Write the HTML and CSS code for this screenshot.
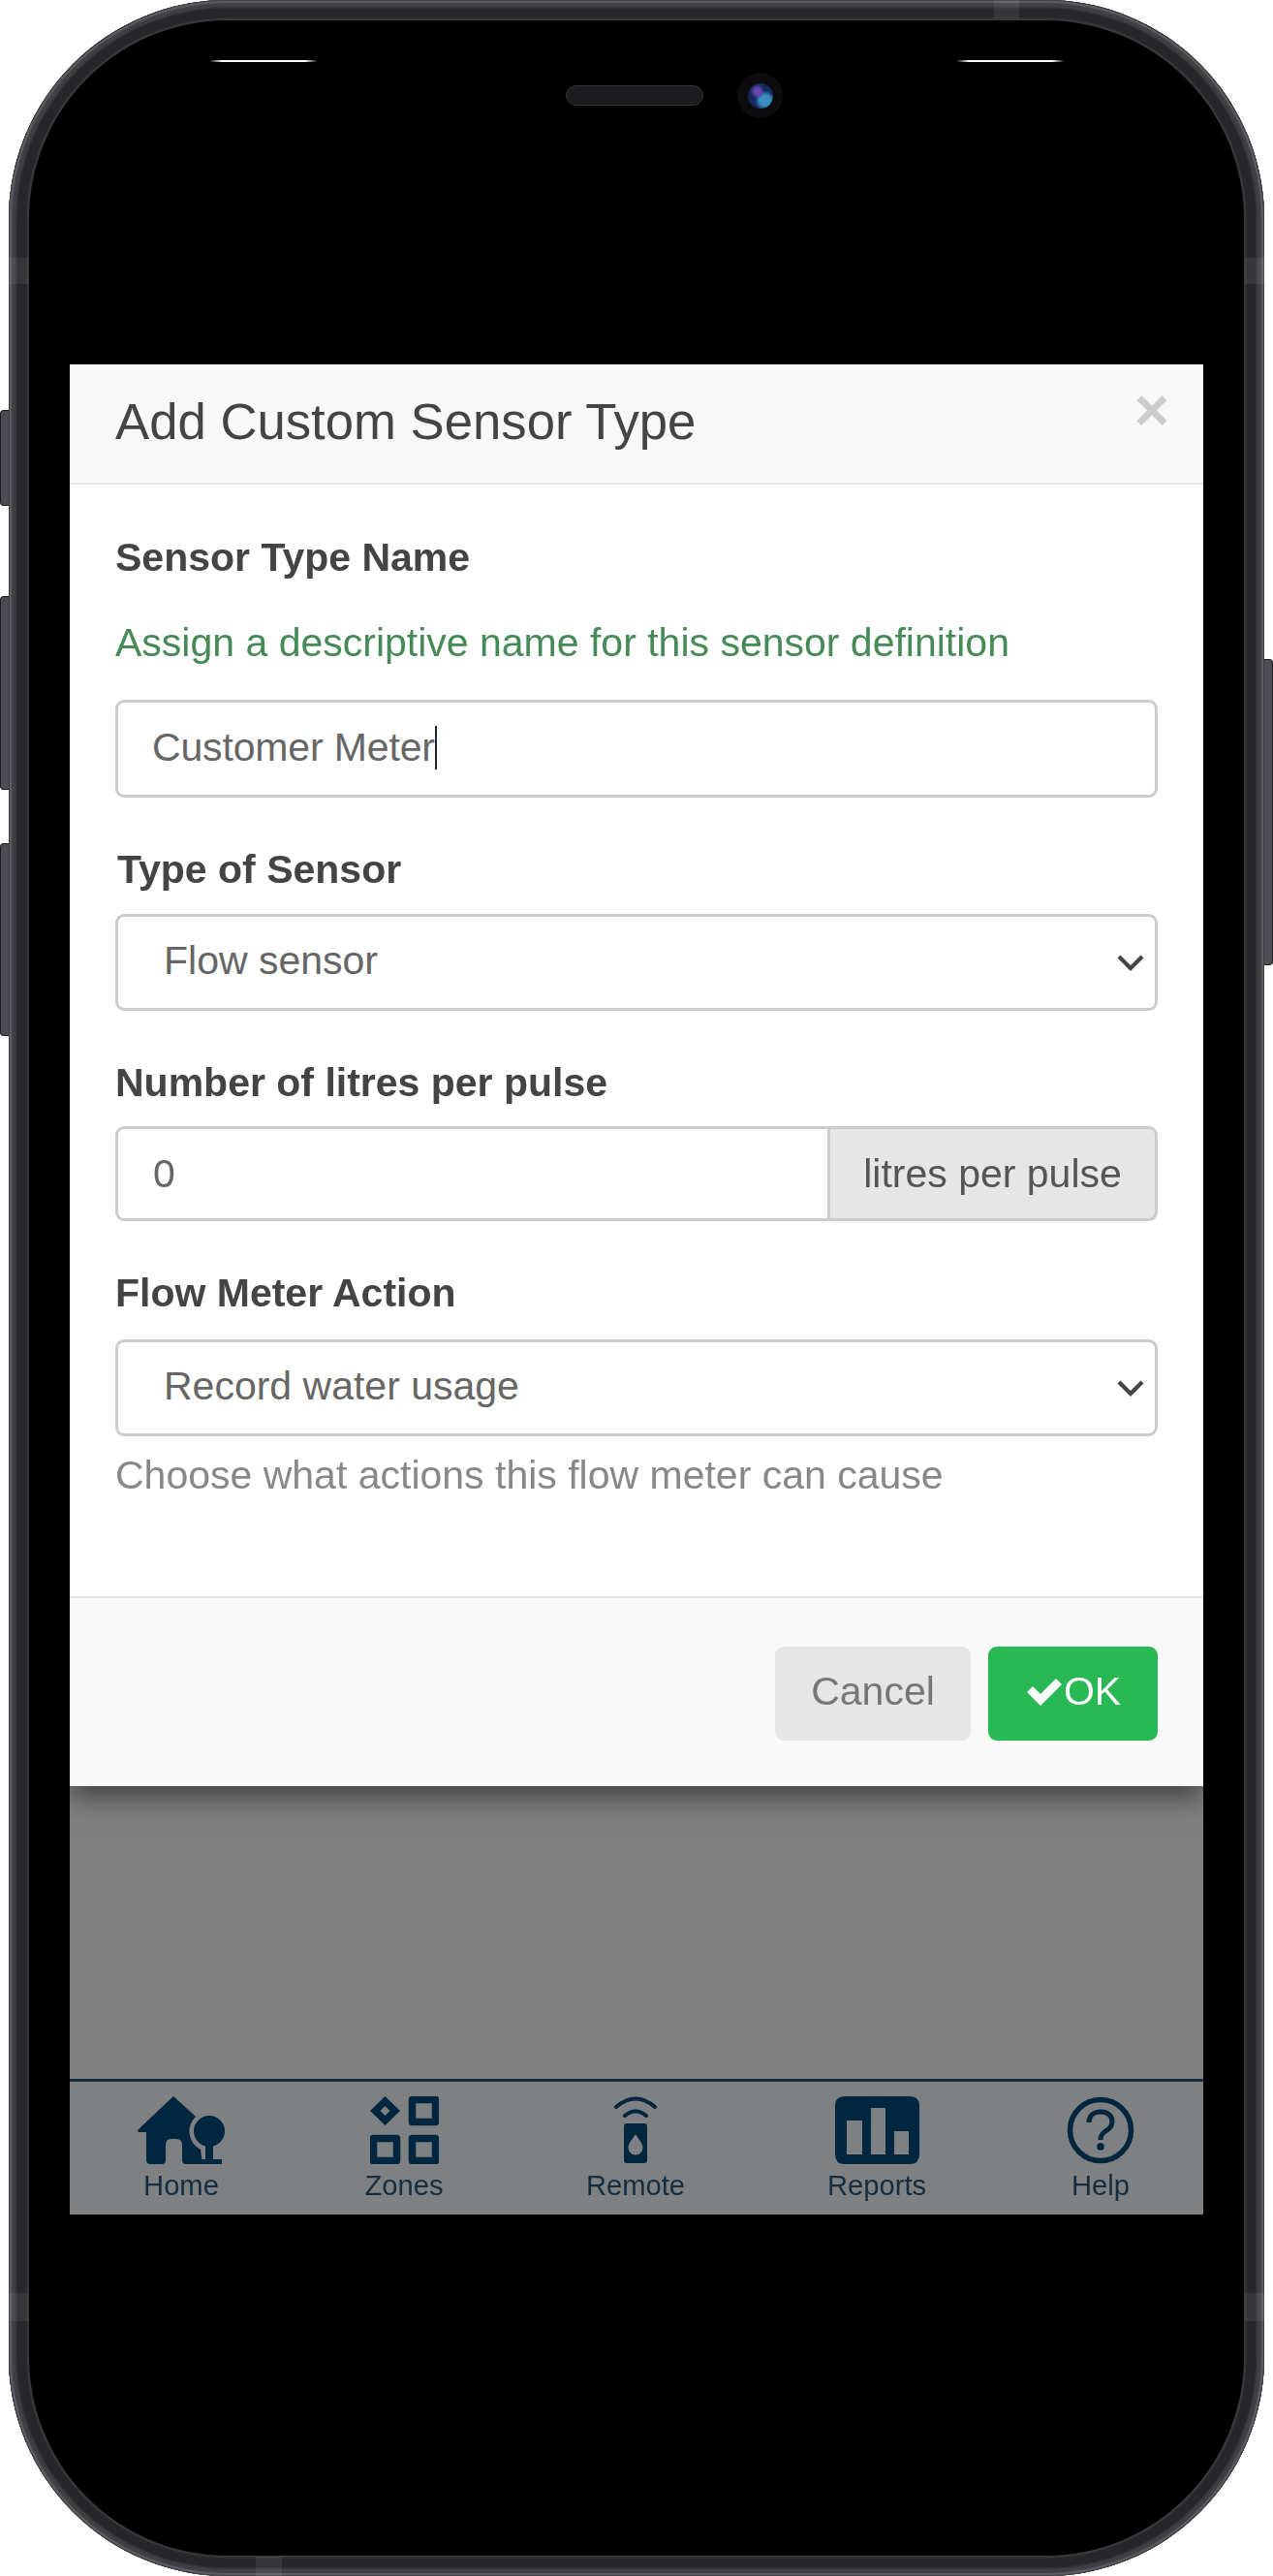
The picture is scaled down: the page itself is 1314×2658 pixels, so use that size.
FILE: index.html
```html
<!DOCTYPE html>
<html lang="en">
<head>
<meta charset="utf-8">
<title>Add Custom Sensor Type</title>
<link rel="stylesheet" href="styles.css">
</head>
<body>
<div class="device">
  <span class="side-btn l1"></span><span class="side-btn l2"></span><span class="side-btn l3"></span><span class="side-btn r1"></span>
  <span class="band b-top"></span><span class="band b-bottom"></span><span class="band b-left1"></span><span class="band b-right1"></span><span class="band b-left2"></span><span class="band b-right2"></span>
  <span class="hair h1"></span><span class="hair h2"></span>
  <span class="speaker"></span>
  <span class="camera"><span class="lens"></span></span>
  <div class="phone">
    <div class="screen">
      <section class="modal">
        <header class="modal-header">
          <h4 class="modal-title">Add Custom Sensor Type</h4>
          <span class="close">×</span>
        </header>
        <div class="modal-body">
          <label class="label label-first">Sensor Type Name</label>
          <p class="hint-green">Assign a descriptive name for this sensor definition</p>
          <div class="control control-name">Customer Meter<span class="caret"></span></div>
          <label class="label label-type">Type of Sensor</label>
          <div class="control control-select">Flow sensor<svg class="chev" viewBox="0 0 28 20"><path d="M2 3l12 12 12-12" fill="none" stroke="#444" stroke-width="4.2"/></svg></div>
          <label class="label label-litres">Number of litres per pulse</label>
          <div class="group">
            <div class="group-input">0</div>
            <div class="group-addon">litres per pulse</div>
          </div>
          <label class="label label-flow">Flow Meter Action</label>
          <div class="control control-select select-flow">Record water usage<svg class="chev" viewBox="0 0 28 20"><path d="M2 3l12 12 12-12" fill="none" stroke="#444" stroke-width="4.2"/></svg></div>
          <p class="help">Choose what actions this flow meter can cause</p>
        </div>
        <footer class="modal-footer">
          <span class="btn btn-cancel">Cancel</span>
          <span class="btn btn-ok"><svg class="check" viewBox="0 0 40 30"><path d="M2 16l6-6 8 8L32 2l6 6-22 22z" fill="#fff"/></svg>OK</span>
        </footer>
      </section>
      <div class="spacer"></div>
      <nav class="tabs">
        <div class="tab">
          <svg class="ico" width="92" height="70" viewBox="0 0 92 70"><path fill="#01263f" d="M38 0L61 21A21 21 0 0 0 66 55L68 70H51q-4 0-4-4V50q0-6-6-6H36q-6 0-6 6V66q0 4-4 4H14q-4 0-4-4V37H3q-3 0-1-3z"/><circle cx="75" cy="36" r="16" fill="#01263f"/><path fill="#01263f" d="M71 50h8v15h9v5H65v-5h6z"/></svg>
          <span>Home</span>
        </div>
        <div class="tab">
          <svg class="ico" width="71" height="70" viewBox="0 0 71 70"><path fill="#01263f" fill-rule="evenodd" d="M15.5 0l15.500 15-15.500 15L0 15zM15.500 10l-5 5 5 5 5-5z"/><path fill="none" stroke="#01263f" stroke-width="7.500" stroke-linejoin="round" d="M43.500 3.500h24v23h-24zM3.500 43.500h24v23h-24zM43.500 43.500h24v23h-24z"/></svg>
          <span>Zones</span>
        </div>
        <div class="tab">
          <svg class="ico" width="44" height="70" viewBox="0 0 44 70"><path fill="none" stroke="#01263f" stroke-width="4" stroke-linecap="round" d="M2 11Q22-6 42 11M11 20Q22 11 33 20"/><path fill="#01263f" fill-rule="evenodd" d="M13 28h18q3 0 3 3v35q0 3-3 3H13q-3 0-3-3V31q0-3 3-3zM22 39c-4 6-7.500 10-7.500 14a7.500 7.500 0 0 0 15 0c0-4-3.500-8-7.500-14z"/></svg>
          <span>Remote</span>
        </div>
        <div class="tab">
          <svg class="ico" width="87" height="70" viewBox="0 0 87 70"><path fill="#01263f" fill-rule="evenodd" d="M10 0h67q10 0 10 10v50q0 10-10 10H10Q0 70 0 60V10Q0 0 10 0zM12 25v35h16V25zM37 12v48h15V12zM61 36v24h15V36z"/></svg>
          <span>Reports</span>
        </div>
        <div class="tab">
          <svg class="ico" width="70" height="70" viewBox="0 0 70 70"><circle cx="35" cy="35" r="31.500" fill="none" stroke="#01263f" stroke-width="5.500"/><path fill="none" stroke="#01263f" stroke-width="5" d="M23 27c0-7 5-11 12-11s12 4 12 10c0 5-3 8-7 10-3 2-5 4-5 9"/><circle cx="35" cy="52" r="3.800" fill="#01263f"/></svg>
          <span>Help</span>
        </div>
      </nav>
    </div>
  </div>
</div>
</body>
</html>
```

FILE: styles.css
```css
* { box-sizing: border-box; }
html, body { margin: 0; padding: 0; background: #fff; }
body { width: 1314px; height: 2658px; overflow: hidden; font-family: "Liberation Sans", Arial, sans-serif; }

.device { position: relative; width: 1314px; height: 2658px; }
.phone {
  width: 1296px; height: 2658px; margin: 0 9px;
  border-radius: 226px; background: #000; padding: 21px;
  box-shadow: inset 0 0 0 1px #3e3e43, inset 0 0 1px 3px #5e5e64, inset 0 0 2px 8px #3f3f45, inset 0 0 1px 18.500px #27272b, inset 0 0 0 21px #38383a;
  display: flex; flex-direction: column;
}
.screen { flex: 1; padding: 355px 42px 352px; display: flex; flex-direction: column; }

.side-btn { position: absolute; width: 9px; background: #4c4c52; border: 1px solid #1d1d22; }
.l1, .l2, .l3 { left: 0; border-right: 0; border-radius: 4px 0 0 4px; }
.r1 { right: 0; border-left: 0; border-radius: 0 4px 4px 0; }
.l1 { top: 423px; height: 99px; }
.l2 { top: 615px; height: 200px; }
.l3 { top: 870px; height: 199px; }
.r1 { top: 680px; height: 316px; }

.band { position: absolute; background: rgba(255,255,255,.07); z-index: 1; }
.b-top { left: 1026px; top: 0; width: 26px; height: 19px; }
.b-bottom { left: 264px; bottom: 0; width: 27px; height: 20px; }
.b-left1 { left: 9px; top: 266px; width: 20px; height: 27px; }
.b-right1 { right: 9px; top: 266px; width: 20px; height: 27px; }
.b-left2 { left: 9px; top: 2366px; width: 20px; height: 29px; }
.b-right2 { right: 9px; top: 2366px; width: 20px; height: 29px; }

.hair { position: absolute; top: 62px; height: 1.500px; width: 112px; z-index: 1;
  background: linear-gradient(90deg, transparent, #fff 12%, #fff 88%, transparent); }
.h1 { left: 216px; }
.h2 { left: 987px; }
.speaker { position: absolute; z-index: 1; left: 584px; top: 88px; width: 142px; height: 21px; border-radius: 11px; background: #1c1c1e; border: 1px solid #333335; }
.camera { position: absolute; z-index: 1; left: 761px; top: 75px; width: 47px; height: 47px; border-radius: 50%; background: #0c0c0e; display: flex; align-items: center; justify-content: center; }
.lens { width: 26px; height: 26px; border-radius: 50%;
  background: radial-gradient(circle at 38% 32%, #6a44b0 0 14%, transparent 30%), radial-gradient(circle at 68% 68%, #3a8fc0 0 22%, transparent 42%), #14285c; }

.modal { background: #fff; height: 1467px; display: flex; flex-direction: column; box-shadow: 0 10px 30px rgba(0,0,0,.55); position: relative; z-index: 1; filter: blur(.45px); }
.modal-header { background: #f8f8f8; height: 124px; border-bottom: 2px solid #e5e5e5; padding: 0 47px 6px; display: flex; align-items: center; justify-content: space-between; }
.modal-title { margin: 0; font-weight: 400; font-size: 52.700px; color: #444; }
.close { font-size: 62px; font-weight: 700; color: #ccc; margin-top: -24px; margin-right: -12px; }

.modal-body { height: 1147px; padding: 0 47px; color: #444; }
.label { display: block; font-weight: 700; font-size: 41px; line-height: 48px; color: #444; }
.label-first { margin-top: 51px; }
.hint-green { margin: 40px 0 0; font-size: 41px; line-height: 48px; color: #468a57; }
.control { height: 101px; border: 3px solid #ccc; border-radius: 9px; background: #fff; display: flex; align-items: center; font-size: 41px; color: #666; position: relative; padding-bottom: 3px; }
.control-name { margin-top: 35px; padding-left: 35px; letter-spacing: -.15px; }
.caret { display: inline-block; width: 2px; height: 45px; background: #223; }
.control-select { margin-top: 22px; padding-left: 47px; height: 100px; }
.select-flow { margin-top: 24px; }
.label-type { margin-top: 50px; padding-left: 2px; }
.label-litres { margin-top: 50px; }
.label-flow { margin-top: 50px; }
.chev { position: absolute; right: 11px; top: 38px; width: 28px; height: 20px; }
.group { display: flex; margin-top: 21px; height: 98px; }
.group-input { flex: 1; border: 3px solid #ccc; border-right: 0; border-radius: 9px 0 0 9px; padding-left: 36px; display: flex; align-items: center; font-size: 41px; color: #666; }
.group-addon { width: 341px; border: 3px solid #ccc; border-radius: 0 9px 9px 0; background: #e6e6e6; display: flex; align-items: center; justify-content: center; font-size: 41px; color: #555; }
.help { margin: 16px 0 0; font-size: 41px; line-height: 48px; color: #888; }

.modal-footer { flex: 1; background: #f9f9f9; border-top: 2px solid #e5e5e5; padding: 50px 47px 0; display: flex; justify-content: flex-end; gap: 18px; align-items: flex-start; }
.btn { height: 97px; border-radius: 9px; padding-bottom: 5px; display: flex; align-items: center; justify-content: center; font-size: 41px; }
.btn-cancel { width: 202px; background: #e6e6e6; color: #777; }
.btn-ok { width: 175px; background: #28b955; color: #fff; }
.check { width: 40px; height: 30px; }

.spacer { flex: 1; background: #808080; }
.tabs { height: 140px; background: #7e8082; border-top: 3px solid #0f2c42; display: grid; grid-template-columns: 230px 230px 248px 250px 212px; }
.tab { display: flex; flex-direction: column; align-items: center; padding-top: 15px; color: #142d40; font-size: 29.200px; line-height: 36px; filter: blur(.6px); }
.ico { display: block; flex: none; margin-bottom: 4px; }
```
